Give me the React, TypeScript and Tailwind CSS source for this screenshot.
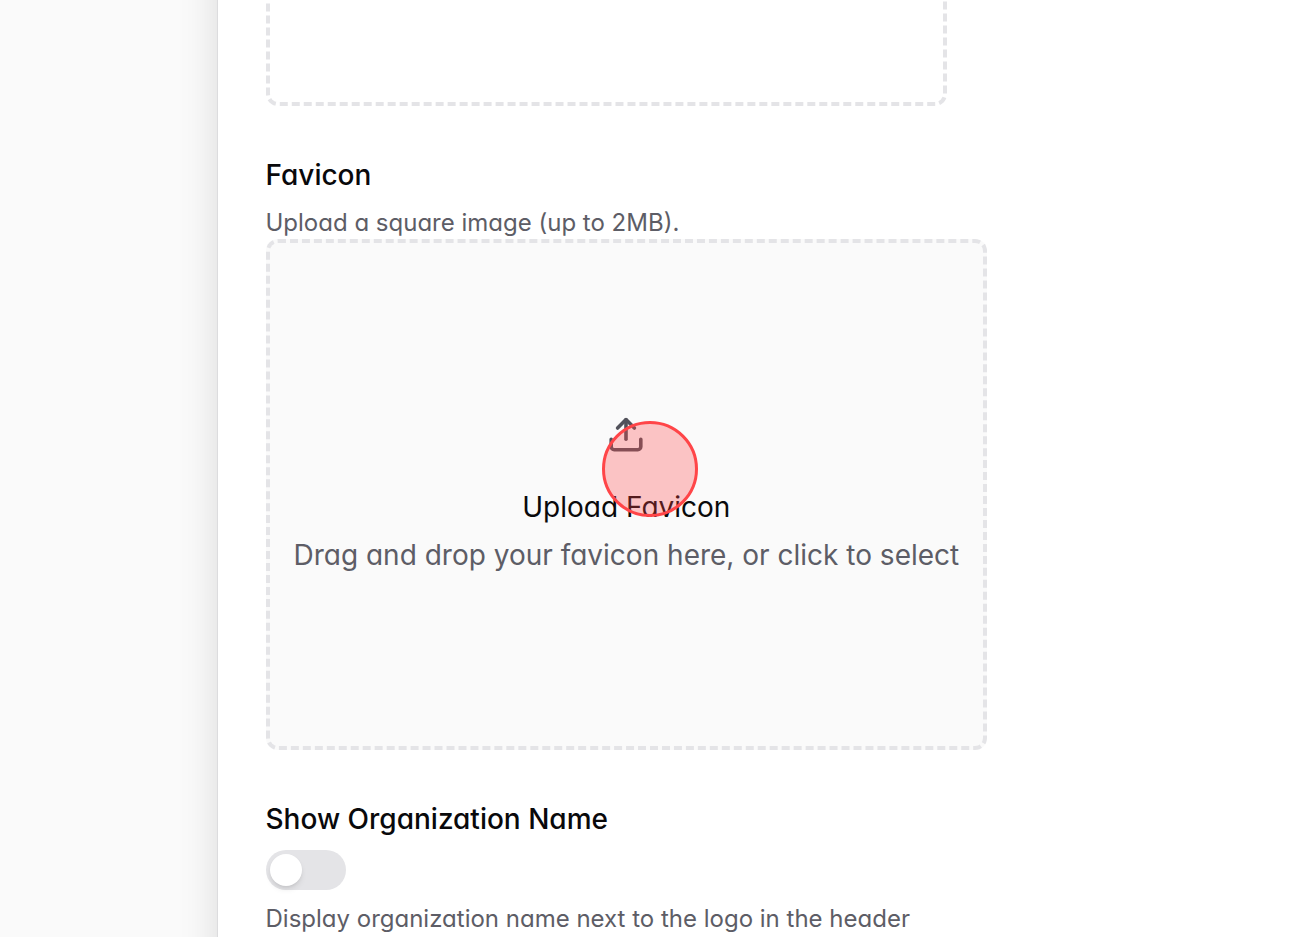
import { useState } from 'react';

function UploadIcon() {
  return (
    <svg
      className="w-10 h-10"
      viewBox="0 0 40 40"
      fill="none"
      stroke="currentColor"
      strokeWidth="3.6"
      strokeLinecap="round"
      strokeLinejoin="round"
      aria-hidden="true"
    >
      <path d="M20 24.3V4.8" />
      <path d="M11.6 13L20 4.6l8.4 8.4" />
      <path d="M5.2 24.3v7.4a3 3 0 0 0 3 3h23.6a3 3 0 0 0 3-3v-7.4" />
    </svg>
  );
}

export default function App() {
  const [showName, setShowName] = useState(false);

  return (
    <div className="flex h-screen overflow-hidden bg-[#fafafa] font-['Inter',sans-serif] [font-feature-settings:'cv11'] text-[#09090b]">
      <aside className="w-1/6 shrink-0" />
      <main className="-my-10 flex-1 bg-white border-l border-[#dcdcde] shadow-[0_0_36px_rgba(0,0,0,0.13)] pl-12">
        {/* logo dropzone, scrolled mostly out of view */}
        <div className="-mt-[365px] w-[681px] h-[511px] border-4 border-dashed border-[#e4e4e7] rounded-xl" />

        <section className="mt-12">
          <h2 className="text-[28px] leading-[42px] font-medium">Favicon</h2>
          <p className="mt-[10px] text-[24px] leading-[33px] text-[#5d5d66]">Upload a square image (up to 2MB).</p>
          <div className="relative w-fit">
            <button
              type="button"
              className="flex h-[511px] flex-col items-center justify-center border-4 border-dashed border-[#e4e4e7] rounded-xl bg-[#fafafa] px-6 cursor-pointer"
            >
              <span className="text-[#52525b]">
                <UploadIcon />
              </span>
              <span className="mt-8 text-[28px] leading-[40px]">Upload Favicon</span>
              <span className="mt-2 text-[28px] leading-[40px] text-[#5d5d66]">
                Drag and drop your favicon here, or click to select
              </span>
            </button>
            {/* click marker */}
            <span className="pointer-events-none absolute left-[336px] top-[182px] w-24 h-24 rounded-full border-[3px] border-[#ff4548] bg-[#ff4548]/30" />
          </div>
        </section>

        <section className="mt-12">
          <h2 className="text-[28px] leading-[42px] font-medium">
            <label htmlFor="show-name">Show Organization Name</label>
          </h2>
          <input
            id="show-name"
            type="checkbox"
            role="switch"
            checked={showName}
            onChange={(e) => setShowName(e.target.checked)}
            className="mt-[10px] block h-10 w-20 appearance-none rounded-full bg-[#e4e4e7] p-1 cursor-pointer before:block before:h-8 before:w-8 before:rounded-full before:bg-white before:shadow-md before:transition-transform checked:bg-[#18181b] checked:before:translate-x-10"
          />
          <p className="mt-3 text-[24px] leading-[33px] text-[#5d5d66]">
            Display organization name next to the logo in the header
          </p>
        </section>
      </main>
    </div>
  );
}
